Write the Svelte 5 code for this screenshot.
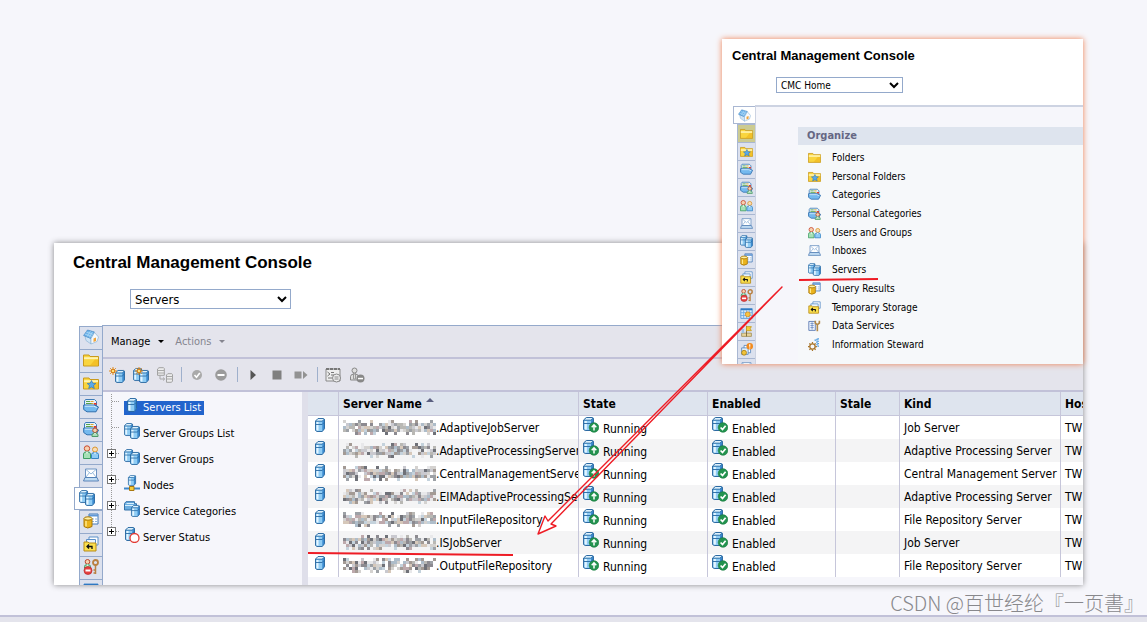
<script>
  const railIcons = ['home', 'folder', 'pfolder', 'category', 'pcategory', 'users', 'inbox', 'servers', 'query', 'temp', 'access', 'calendar', 'flag', 'alert', 'inbox'];
  const railNames = ['CMC Home', 'Folders', 'Personal Folders', 'Categories', 'Personal Categories', 'Users and Groups', 'Inboxes', 'Servers', 'Query Results', 'Temporary Storage', 'Access Levels', 'Calendars', 'Events', 'Alerts', 'Applications'];

  const organize = [
    ['folder', 'Folders'],
    ['pfolder', 'Personal Folders'],
    ['category', 'Categories'],
    ['pcategory', 'Personal Categories'],
    ['users', 'Users and Groups'],
    ['inbox', 'Inboxes'],
    ['servers', 'Servers'],
    ['query', 'Query Results'],
    ['temp', 'Temporary Storage'],
    ['data', 'Data Services'],
    ['steward', 'Information Steward']
  ];

  const tree = [
    { icon: 'server', label: 'Servers List', selected: true },
    { icon: 'servers', label: 'Server Groups List' },
    { icon: 'servers', label: 'Server Groups', expandable: true },
    { icon: 'node', label: 'Nodes', expandable: true },
    { icon: 'service', label: 'Service Categories', expandable: true },
    { icon: 'status', label: 'Server Status', expandable: true }
  ];

  const rows = [
    ['AdaptiveJobServer', 'Job Server'],
    ['AdaptiveProcessingServer', 'Adaptive Processing Server'],
    ['CentralManagementServer', 'Central Management Server'],
    ['EIMAdaptiveProcessingServer', 'Adaptive Processing Server'],
    ['InputFileRepository', 'File Repository Server'],
    ['ISJobServer', 'Job Server'],
    ['OutputFileRepository', 'File Repository Server']
  ];

  const shades = ['#d4d2d0', '#b9b8b4', '#9da1a6', '#8c8a90', '#d6c8ba', '#aebdca', '#e8e8ea', '#a39a94', '#c4d2dc', '#6f7178', '#bda9ac', '#c9c9cf'];

  // Mosaic that hides the host part of each server name.
  function mosaic(seed) {
    let s = seed * 7919 + 17;
    const next = () => (s = (s * 1103515245 + 12345) % 2147483648) / 2147483648;
    const out = [];
    for (let y = 0; y < 5; y++) {
      for (let x = 0; x < 31; x++) {
        const fill = shades[Math.floor(next() * shades.length)];
        const keep = y === 0 || y === 4 ? 0.35 : 0.92;
        if (next() < keep) out.push({ x: x * 3, y: y * 3, fill });
      }
    }
    return out;
  }
</script>

{#snippet cyl(x, y, w, h)}
  <g transform="translate({x} {y}) scale({w / 10} {h / 14})">
    <path d="M.5 3 3 .5h5.500l1 .8v9.400L7.300 13.500H2L.5 12.500Z" fill="#8fccf4" />
    <path d="M7.300 3.300 9.300 1.300v9.400L7.300 13Z" fill="#3b8bd0" />
    <path d="M.8 3 3.200.8h5.300L7.200 3Z" fill="#dcf1fd" />
    <path d="M1.500 4v8.500h2V4Z" fill="#e4f5ff" />
    <path d="M.8 3.200h6.400l2-2M.8 6.500h6.400l2-2" fill="none" stroke="#2b6ca6" stroke-width=".9" />
    <path d="M.5 3 3 .5h5.500l1 .8v9.400L7.300 13.500H2L.5 12.500Z" fill="none" stroke="#23629c" stroke-width=".9" />
  </g>
{/snippet}

{#snippet folderShape()}
  <path d="M.5 3h5.500l1 1.500h8.500V14H.5Z" fill="#f9d53f" stroke="#c99a1e" />
  <path d="M1 5.200h14v2H1Z" fill="#fff3b0" />
  <path d="M12 7.500h3v6H7Z" fill="#efb41a" opacity=".6" />
{/snippet}

{#snippet catShape()}
  <path d="M1.500 10V3l1-1.500h9l2 2V8Z" fill="#e6f2fa" stroke="#3d7cb8" />
  <path d="M3 3.500h4M3 5.500h6" stroke="#58a54a" />
  <path d="M7.500 3.500h3M8.500 5.500h2" stroke="#e2a52d" />
  <path d="M11 5h2.500v1.800H11Z" fill="#e2332c" />
  <path d="M.7 7h10.800l4 2-2.500 4.800H4L.7 11.500Z" fill="#74b9ee" stroke="#2f6fae" />
  <path d="M1.800 8.200h9l3 1.300" fill="none" stroke="#d6efff" />
{/snippet}

{#snippet person(x, y, hair, body)}
  <g transform="translate({x} {y})">
    <circle cx="3.500" cy="2.800" r="2.300" fill="#f7d0ae" stroke={hair} />
    <path d="M.5 9V7.500Q.5 5.500 3.500 5.500t3 2V9Z" fill={body[0]} stroke={body[1]} />
    <path d="M2.500 5.500 3.500 7l1-1.500" fill="#fff" />
  </g>
{/snippet}

{#snippet sun(x, y)}
  <g transform="translate({x} {y})">
    <path d="M4 0v8M0 4h8M1.200 1.200l5.600 5.600M6.800 1.200 1.200 6.800" stroke="#e08a1c" />
    <circle cx="4" cy="4" r="1.800" fill="#ffe27a" stroke="#d77d14" />
  </g>
{/snippet}

{#snippet icon(name)}
  <svg class="icon" viewBox="0 0 16 16" aria-hidden="true">
    {#if name === 'home'}
      <path d="M2 7 8 9.500V15L3 11.500Z" fill="#cfe4f6" stroke="#8eb4d6" stroke-width=".7" />
      <path d="M.6 6.500 4.500 1 11.500 3 8 9.500Z" fill="#6db3ea" stroke="#4287c4" stroke-width=".7" />
      <path d="M1.800 5 9 7.600M3.200 3l6.900 2.500M4 7.500l3.500-5.300M6.200 8.500l3.300-5.700" stroke="#b5dcf7" stroke-width=".7" />
      <path d="m8 9.500 3.500-6 4 4.500-1.500 4.500L8 15Z" fill="#f4f9fd" stroke="#8eb4d6" stroke-width=".7" />
      <path d="M10.500 9.500 13 8.500v3.500l-2.500 1Z" fill="#f1a33a" />
    {:else if name === 'folder'}
      {@render folderShape()}
    {:else if name === 'pfolder'}
      {@render folderShape()}
      <path d="m8.500 5.500 1.300 2.700 3 .3-2.300 2 .8 3-2.800-1.500-2.800 1.500.8-3-2.300-2 3-.3Z" fill="#58a9ec" stroke="#2c77bd" stroke-width=".7" />
    {:else if name === 'category'}
      {@render catShape()}
    {:else if name === 'pcategory'}
      {@render catShape()}
      {@render person(8.500, 6.500, '#b14f2c', ['#a9dcb8', '#4c9a68'])}
    {:else if name === 'users'}
      <circle cx="4" cy="4.500" r="2.700" fill="#f7d0ae" stroke="#c8492e" />
      <circle cx="12" cy="5.500" r="2.500" fill="#f9dcb4" stroke="#d9962f" />
      <path d="M.5 14.500V10q0-2.200 3.500-2.200T7.500 10v4.500Z" fill="#a6e0b6" stroke="#3e9e62" />
      <path d="M8.500 14.500v-4q0-2 3.500-2t3.500 2v4Z" fill="#8ecbf5" stroke="#3784c4" />
      <path d="M3 7.800 4 10l1-2.200M11 8.500l1 2 1-2" fill="#fff" />
    {:else if name === 'inbox'}
      <path d="M2.500 2h11v8.500h-11Z" fill="#fff" stroke="#6d93c2" />
      <path d="m3 2.500 5 4.500 5-4.500M3 10l3.500-4.500M13 10 9.500 5.500" fill="none" stroke="#7fa9d4" stroke-width=".8" />
      <path d="M2 10.500h12l1.500 3.500H.5Z" fill="#c0dcf3" stroke="#4e7cb2" stroke-width=".9" />
    {:else if name === 'server'}
      {@render cyl(3, 1, 10, 14)}
    {:else if name === 'servers'}
      {@render cyl(0, 0, 9, 13)}
      {@render cyl(6, 3, 10, 13)}
    {:else if name === 'newserver'}
      {@render cyl(6, 3, 10, 13)}
      {@render sun(0, 0)}
    {:else if name === 'newgroup'}
      {@render cyl(0, 1, 9, 13)}
      {@render cyl(6, 3, 10, 13)}
      {@render sun(2, 0)}
    {:else if name === 'query'}
      <path d="M6 1h9v10H6Z" fill="#fff" stroke="#4378b8" />
      <path d="M6 1.500h9v2H6Z" fill="#5f97d6" />
      <path d="M9 6h5M9 8.500h5" stroke="#8db4dd" stroke-dasharray="2 1" />
      <path d="M1 5.500v8Q4.500 16.500 9 13.500v-8Z" fill="#eab31c" stroke="#a87608" />
      <ellipse cx="5" cy="5.500" rx="4" ry="1.700" fill="#fff0a0" stroke="#a87608" />
      <path d="M3 8v5.500" stroke="#ffe88a" stroke-width="1.500" />
    {:else if name === 'temp'}
      <path d="M6 1h9v8H6Z" fill="#fff" stroke="#5b8fc8" />
      <path d="M3.500 3.500h9v8h-9Z" fill="#eaf4fc" stroke="#5b8fc8" />
      <path d="M1 6h4l1 1h7v8H1Z" fill="#fbe04e" stroke="#b78b16" />
      <path d="M4 10.500h5v2.500M6 8.500l-2 2 2 2" fill="none" stroke="#111" stroke-width="1.300" />
    {:else if name === 'access'}
      {@render person(1, 0, '#b8452c', ['#a6e0b6', '#3e9e62'])}
      <circle cx="5" cy="11.500" r="4" fill="#e54040" stroke="#b92828" stroke-width=".7" />
      <path d="M2.500 10.500h5v2h-5Z" fill="#fff" />
      <circle cx="12.500" cy="3.500" r="2.500" fill="none" stroke="#b98142" stroke-width="1.800" />
      <path d="M12.500 6v9M12.500 11h-2M12.500 14h-2" stroke="#b98142" stroke-width="1.500" />
    {:else if name === 'calendar'}
      <path d="M1 2h14v12H1Z" fill="#d7ebfb" stroke="#4d8fd0" />
      <path d="M1 3h14" stroke="#2f78c2" stroke-width="2" />
      <path d="M1 7h14M1 10.500h14M4.500 4v10M8 4v10M11.500 4v10" stroke="#6aa8df" />
      <circle cx="9.500" cy="9" r="3" fill="#f6c542" stroke="#dd8b1b" />
    {:else if name === 'flag'}
      <path d="M2 10h12v4H2Z" fill="#e7d49a" stroke="#9f8d55" />
      <path d="M8 1v13" stroke="#6c5b2c" />
      <path d="M8 2h6l-1.500 2.500L14 7H8Z" fill="#f5cf35" stroke="#c89a19" />
      <path d="M2 5h3v5H2Z" fill="#9ec2e4" />
    {:else if name === 'alert'}
      <path d="M5 3h8v9H5Z" fill="#fff" stroke="#5484bd" />
      <path d="M2 6h8v8H2Z" fill="#e4f0fa" stroke="#5484bd" />
      <circle cx="5" cy="12" r="3" fill="#f0c33a" stroke="#a97c10" />
      <circle cx="12" cy="4" r="4" fill="#f28a1d" />
      <path d="M12 1.500v3M12 5.500v1.200" stroke="#fff" stroke-width="1.400" />
    {:else if name === 'data'}
      <path d="M1 3h8v11H1Z" fill="#eef4fc" stroke="#4d6fae" />
      <path d="M3 5.500h4M3 8h4M3 10.500h4M5 4v9" stroke="#6d8cc4" />
      <path d="M9 2v3l2.500 2L14 5V2M11.500 7v8" fill="none" stroke="#b28a4a" stroke-width="2" />
    {:else if name === 'steward'}
      <circle cx="5.500" cy="10.500" r="3.300" fill="none" stroke="#a8762c" stroke-width="1.600" />
      <path d="M5.500 5v2M5.500 14v2M0 10.500h2M9 10.500h2M1.700 6.700l1.400 1.400M8 13l1.400 1.400M1.700 14.400l1.400-1.400M8 8l1.400-1.400" stroke="#a8762c" stroke-width="1.500" />
      <path d="M8 2.500h2M11.500 1h3M11.500 4h3M11.500 7h3M11.500 10h3M11 1v9" stroke="#4b9be0" stroke-width="1.500" stroke-dasharray="2 1" />
    {:else if name === 'node'}
      {@render cyl(4, 0, 8, 11)}
      <path d="M0 13.500h16" stroke="#3f87c8" stroke-width="2" />
      <path d="M5.500 11.500h4.500v4H5.500Z" fill="#f5cd3c" stroke="#a9780f" />
    {:else if name === 'service'}
      <path d="M.5 9V2.500L2 .7h8.500v2h2V9Z" fill="#6caee0" stroke="#3472aa" />
      <path d="M1 4.500h10.500M2.500 2.500h7.500" stroke="#d7effd" />
      {@render cyl(7, 4, 9, 12)}
    {:else if name === 'status'}
      {@render cyl(1, 0, 10, 14)}
      <circle cx="10.500" cy="11" r="4.500" fill="#fff" stroke="#e23b34" stroke-width="1.300" />
    {:else if name === 'running' || name === 'enabled'}
      {@render cyl(0, 0, 11, 14)}
      <circle cx="11" cy="10.500" r="4.800" fill="#23934f" stroke="#177a3d" stroke-width=".6" />
      {#if name === 'running'}
        <path d="M11 13.500V8M8.700 10.200 11 7.800l2.300 2.400" fill="none" stroke="#fff" stroke-width="1.500" />
      {:else}
        <path d="m8.600 10.500 1.900 2 3.100-3.800" fill="none" stroke="#fff" stroke-width="1.700" />
      {/if}
    {:else if name === 'clone'}
      <path d="M.5 2 2 .7h4.500l.8.8v6.800H.5ZM9.500 8l1.300-1.300h4l.7.8v6.500l-1 1.300h-5Z" fill="#ececec" stroke="#a2a2a2" />
      <path d="M.5 3.500h6.800M.5 6h6.800M9.500 9.500h6M9.500 12h6M3 8.500v3.500h4.500M6 10.500 7.700 12 6 13.500" fill="none" stroke="#a8a8a8" />
    {:else if name === 'enable'}
      <circle cx="8" cy="8" r="5" fill="#aaaaaa" />
      <path d="m5.500 8 2 2.200L10.800 6" fill="none" stroke="#fff" stroke-width="1.600" />
    {:else if name === 'disable'}
      <circle cx="8" cy="8" r="5.800" fill="#9b9b9b" />
      <path d="M4.500 7h7v2h-7Z" fill="#fff" />
    {:else if name === 'start'}
      <path d="M5.500 3 11 8l-5.500 5Z" fill="#555" />
    {:else if name === 'stop'}
      <path d="M3.500 3.500h9v9h-9Z" fill="#808080" />
    {:else if name === 'restart'}
      <path d="M1.500 4.500h7v7h-7ZM10 4v8l4.500-4Z" fill="#929292" />
    {:else if name === 'placeholder'}
      <path d="M1 2h14v12H1Z" fill="#eee" stroke="#888" />
      <path d="M1 2h14" stroke="#777" stroke-width="2" stroke-dasharray="3 1" />
      <path d="M2.500 5 5 7 2.500 9M6 5.500h3M6 8h3M3 11h4" fill="none" stroke="#777" />
      <circle cx="11.500" cy="11" r="4" fill="#eee" stroke="#888" />
      <path d="M9.500 10h4M9.500 12h4" stroke="#888" />
    {:else if name === 'userdel'}
      <circle cx="5.500" cy="3.500" r="2.500" fill="#ddd" stroke="#888" />
      <path d="M1.500 13V9.500Q1.500 7 5.500 7T9.500 9.500V13Z" fill="#ddd" stroke="#888" />
      <path d="M4.500 6v6h2V6" fill="none" stroke="#999" />
      <circle cx="11.500" cy="11.500" r="4" fill="#888" />
      <path d="M9 10.800h5v1.500H9Z" fill="#fff" />
    {/if}
  </svg>
{/snippet}

<main class="page">
  <section class="window servers" aria-label="Servers">
    <h1>Central Management Console</h1>
    <div class="picker">
      <select aria-label="Console area"><option>Servers</option></select>
    </div>
    <div class="workspace">
      <nav class="rail" aria-label="Areas">
        {#each railIcons.slice(0, 12) as name, i}
          <button class:active={i === 7} aria-label={railNames[i]}>{@render icon(name)}</button>
        {/each}
      </nav>
      <div class="panel">
        <div class="menubar">
          <button>Manage <i class="caret"></i></button>
          <button disabled>Actions <i class="caret"></i></button>
        </div>
        <div class="toolbar">
          <button aria-label="New server">{@render icon('newserver')}</button>
          <button aria-label="New server group">{@render icon('newgroup')}</button>
          <button aria-label="Clone server">{@render icon('clone')}</button>
          <span class="sep"></span>
          <button aria-label="Enable">{@render icon('enable')}</button>
          <button aria-label="Disable">{@render icon('disable')}</button>
          <span class="sep"></span>
          <button aria-label="Start">{@render icon('start')}</button>
          <button aria-label="Stop">{@render icon('stop')}</button>
          <button aria-label="Restart">{@render icon('restart')}</button>
          <span class="sep"></span>
          <button aria-label="Placeholders">{@render icon('placeholder')}</button>
          <button aria-label="User security">{@render icon('userdel')}</button>
        </div>
        <div class="body">
          <ul class="tree">
            {#each tree as item}
              <li>
                <span class="branch">
                  {#if item.expandable}<button class="plus" aria-label="Expand {item.label}"></button>{/if}
                </span>
                <a href="#tree" class:selected={item.selected}>{@render icon(item.icon)}<span>{item.label}</span></a>
              </li>
            {/each}
          </ul>
          <div class="grid">
            <table>
              <colgroup>
                <col class="c-icon" /><col class="c-name" /><col class="c-state" /><col class="c-enabled" />
                <col class="c-stale" /><col class="c-kind" /><col />
              </colgroup>
              <thead>
                <tr>
                  <th aria-label="Type"></th>
                  <th>Server Name <i class="asc"></i></th>
                  <th>State</th>
                  <th>Enabled</th>
                  <th>Stale</th>
                  <th>Kind</th>
                  <th>Host</th>
                </tr>
              </thead>
              <tbody>
                {#each rows as [name, kind], i}
                  <tr>
                    <td class="type">{@render icon('server')}</td>
                    <td>
                      <div class="server-name">
                        <svg class="mosaic" viewBox="0 0 93 15" aria-hidden="true">
                          {#each mosaic(i + 1) as b}<rect x={b.x} y={b.y} width="3" height="3" fill={b.fill} />{/each}
                        </svg>
                        <span>.{name}</span>
                      </div>
                    </td>
                    <td><div class="flagged">{@render icon('running')}<span>Running</span></div></td>
                    <td><div class="flagged">{@render icon('enabled')}<span>Enabled</span></div></td>
                    <td></td>
                    <td>{kind}</td>
                    <td>TW</td>
                  </tr>
                {/each}
              </tbody>
            </table>
          </div>
        </div>
      </div>
    </div>
  </section>

  <section class="window home" aria-label="CMC Home">
    <h2>Central Management Console</h2>
    <div class="picker">
      <select aria-label="Console area"><option>CMC Home</option></select>
    </div>
    <div class="workspace">
      <nav class="rail" aria-label="Areas">
        {#each railIcons as name, i}
          <button class:active={i === 0} class:hover={i === 1} aria-label={railNames[i]}>{@render icon(name)}</button>
        {/each}
      </nav>
      <div class="panel">
        <h3>Organize</h3>
        <ul class="organize">
          {#each organize as [name, label]}
            <li><a href="#organize">{@render icon(name)}<span>{label}</span></a></li>
          {/each}
        </ul>
      </div>
    </div>
  </section>

  <svg class="marks" viewBox="0 0 785 290" aria-hidden="true">
    <g fill="none" stroke="#ee1c25" stroke-linejoin="round">
      <path d="M482 8 248 242l-3-5-7 18 18-8-5-2Z" stroke-width="1.400" />
      <path d="M499 1 578 0" stroke-width="2" />
      <path d="M8 274 213 276" stroke-width="2" />
    </g>
  </svg>

  <p class="watermark">CSDN @百世经纶『一页書』</p>
  <footer></footer>
</main>

<style>
  :global(body) {
    margin: 0;
    background: #f6f6fb;
  }
  .page {
    position: relative;
    display: flex;
    flex-direction: column;
    min-height: 100vh;
    box-sizing: border-box;
    padding-top: 243px;
    overflow: hidden;
    font-family: "DejaVu Sans Condensed", "DejaVu Sans", sans-serif;
    font-size: 12px;
    color: #000;
  }
  h1, h2, h3, ul, p {
    margin: 0;
    padding: 0;
  }
  ul {
    list-style: none;
  }
  button {
    font: inherit;
    color: inherit;
    border: 0;
    padding: 0;
    background: none;
  }
  a {
    color: inherit;
    text-decoration: none;
  }
  .icon {
    display: block;
    flex: none;
    width: 16px;
    height: 16px;
  }
  .window {
    background: #fff;
    overflow: hidden;
  }
  h1, h2 {
    font-family: "Liberation Sans", Arial, sans-serif;
    font-weight: bold;
  }
  select {
    font: inherit;
    color: #000;
    background: #fff;
    border: 1px solid #94a9cb;
    border-radius: 0;
    box-sizing: border-box;
    padding: 0;
  }
  .workspace {
    display: flex;
    align-items: flex-start;
  }
  .rail {
    display: flex;
    flex-direction: column;
    align-items: flex-end;
    flex: none;
  }
  .rail button {
    display: flex;
    align-items: center;
    justify-content: center;
    box-sizing: border-box;
    background: #dce1ee;
    border: 1px solid #94a9cb;
    border-width: 1px 0 0 1px;
  }
  .rail .active {
    background: #fff;
    border-bottom-width: 1px;
  }
  .panel {
    flex: 1;
    min-width: 0;
  }

  .servers {
    height: 342px;
    margin: 0 64px 0 54px;
    box-shadow: 0 0 6px rgba(0, 0, 0, 0.45);
  }
  .servers h1 {
    padding: 10px 0 0 19px;
    font-size: 17px;
    line-height: 20px;
  }
  .servers .picker {
    padding: 16px 0 16px 76px;
  }
  .servers select {
    display: block;
    width: 161px;
    height: 20px;
    font-size: 13px;
  }
  .servers .rail {
    width: 48px;
    padding-top: 1px;
  }
  .servers .rail button {
    width: 23px;
    height: 23px;
    padding-bottom: 2px;
  }
  .servers .rail .active {
    width: 28px;
    padding-right: 4px;
  }
  .servers .panel {
    border: 1px solid #94a9cb;
    border-width: 1px 0 0 1px;
    background: #f6f6fb;
  }
  .menubar, .toolbar {
    display: flex;
    align-items: center;
    box-sizing: border-box;
    background: #e4e4ec;
    border-bottom: 2px solid #c1c1d8;
  }
  .menubar {
    height: 33px;
    gap: 11px;
    padding-left: 8px;
    font-size: 11px;
  }
  .menubar button {
    display: flex;
    align-items: center;
    gap: 8px;
  }
  .menubar button:disabled {
    color: #85858f;
  }
  .caret {
    border: 3px solid transparent;
    border-top-color: currentColor;
    border-bottom: 0;
  }
  .toolbar {
    height: 33px;
    gap: 8px;
    padding-left: 6px;
  }
  .sep {
    width: 1px;
    height: 15px;
    margin-right: -1px;
    background: #9fb0cc;
  }
  .body {
    display: flex;
    min-height: 194px;
  }
  .tree {
    flex: none;
    box-sizing: border-box;
    width: 205px;
    padding: 2px 0 0 4px;
    border-right: 6px solid #dfdfea;
    font-size: 11px;
  }
  .tree li {
    display: flex;
    align-items: center;
    height: 26px;
  }
  .branch {
    flex: none;
    align-self: stretch;
    width: 17px;
    background:
      repeating-linear-gradient(90deg, #999 0 1px, transparent 1px 2px) 5px 7px / 8px 1px no-repeat,
      repeating-linear-gradient(#999 0 1px, transparent 1px 2px) 4px 0 / 1px 100% no-repeat;
  }
  .tree li:last-child .branch {
    background-size: 8px 1px, 1px 8px;
  }
  .plus {
    display: block;
    width: 9px;
    height: 9px;
    margin-top: 3px;
    box-sizing: border-box;
    border: 1px solid #777;
    background:
      linear-gradient(#000, #000) center / 5px 1px no-repeat,
      linear-gradient(#000, #000) center / 1px 5px no-repeat,
      #fff;
  }
  .tree a {
    display: flex;
    align-items: center;
    height: 14px;
    line-height: 14px;
    gap: 3px;
    padding-right: 3px;
    margin-top: 2px;
  }
  .tree a .icon {
    margin-bottom: 6px;
  }
  .tree .selected {
    color: #fff;
    background: #2264cc;
  }
  .grid {
    flex: 1;
    min-width: 0;
    overflow: hidden;
  }
  table {
    width: 100%;
    table-layout: fixed;
    border-collapse: separate;
    border-spacing: 0;
  }
  .c-icon { width: 31px; }
  .c-name { width: 240px; }
  .c-state { width: 129px; }
  .c-enabled { width: 128px; }
  .c-stale { width: 64px; }
  .c-kind { width: 161px; }
  th, td {
    box-sizing: border-box;
    height: 23px;
    padding: 0 0 0 4px;
    overflow: hidden;
    white-space: nowrap;
    text-align: left;
    line-height: 16px;
    border-right: 1px solid #c6c6da;
  }
  th:last-child, td:last-child {
    border-right: 0;
  }
  th {
    background: #dee4ee;
    border-bottom: 1px solid #c6c6da;
    height: 24px;
  }
  td {
    background: #fff;
  }
  tr:nth-child(even) td {
    background: #f4f4f5;
  }
  .asc {
    display: inline-block;
    vertical-align: 6px;
    border: 4px solid transparent;
    border-bottom-color: #5a5f80;
    border-top: 0;
  }
  .type .icon {
    margin-bottom: 5px;
  }
  .server-name, .flagged {
    display: flex;
    align-items: center;
  }
  .mosaic {
    flex: none;
    width: 93px;
    height: 15px;
  }
  .flagged {
    gap: 4px;
  }
  .flagged .icon {
    margin-bottom: 5px;
  }
  .flagged span {
    padding-top: 2px;
  }

  .home {
    position: absolute;
    top: 39px;
    right: 64px;
    width: 361px;
    height: 325px;
    box-shadow: 0 0 6px #f08050;
    font-size: 10px;
  }
  .home h2 {
    padding: 9px 0 0 10px;
    font-size: 13px;
    line-height: 16px;
  }
  .home .picker {
    padding: 13px 0 12px 54px;
  }
  .home select {
    display: block;
    width: 127px;
    height: 16px;
  }
  .home .rail {
    width: 33px;
    padding-top: 1px;
  }
  .home .rail button {
    width: 18px;
    height: 18px;
    border-color: #a9b7d2;
  }
  .home .rail .active {
    width: 22px;
  }
  .home .rail .hover {
    background: #cccb91;
  }
  .home .icon {
    width: 13px;
    height: 13px;
  }
  .home .panel {
    box-sizing: border-box;
    height: 264px;
    padding: 20px 0 0 42px;
    background: #f6f6fb;
    border: 1px solid #cdd3e2;
    border-width: 2px 0 0 1px;
  }
  .home h3 {
    padding-left: 9px;
    font-size: 11px;
    line-height: 18px;
    color: #666783;
    background: #dee4ee;
  }
  .organize {
    display: grid;
    grid-auto-rows: 1fr;
    height: 206px;
    padding: 3px 0 16px 10px;
    background: #f6f8fa;
  }
  .organize a {
    display: flex;
    align-items: center;
    height: 100%;
    gap: 11px;
  }

  .marks {
    position: absolute;
    right: 62px;
    top: 279px;
    width: 785px;
    height: 290px;
    overflow: visible;
    pointer-events: none;
  }
  .watermark {
    margin-top: auto;
    padding-right: 3px;
    text-align: right;
    font-family: "Noto Sans CJK SC", sans-serif;
    font-size: 20px;
    font-weight: 300;
    line-height: 24px;
    color: #88888c;
  }
  footer {
    height: 5px;
    border-top: 2px solid #c1c1d8;
    background: #e4e4ec;
  }
</style>
